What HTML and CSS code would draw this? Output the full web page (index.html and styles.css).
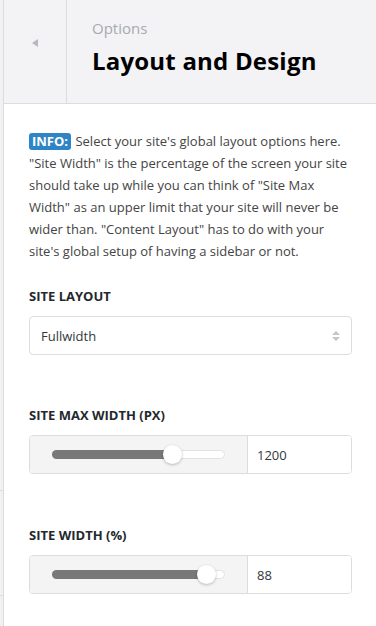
FILE: index.html
```html
<!DOCTYPE html>
<html>
<head>
<meta charset="utf-8">
<link rel="stylesheet" href="styles.css">
</head>
<body>
<div class="frame">
  <div class="strip">
    <div class="strip-block strip-a"></div>
    <div class="strip-block strip-b"></div>
    <div class="strip-block strip-c"></div>
  </div>
  <div class="panel">
    <header class="head">
      <div class="back"><span class="back-arrow"></span></div>
      <div class="titles">
        <div class="crumb">Options</div>
        <h1 class="title">Layout and Design</h1>
      </div>
    </header>
    <main class="content">
      <p class="info"><span class="badge">INFO:</span> Select your site's global layout options here. "Site Width" is the percentage of the screen your site should take up while you can think of "Site Max Width" as an upper limit that your site will never be wider than. "Content Layout" has to do with your site's global setup of having a sidebar or not.</p>

      <section class="field field-layout">
        <div class="label">Site Layout</div>
        <div class="select">
          <span class="select-value">Fullwidth</span>
          <span class="select-arrows"><span class="arr-up"></span><span class="arr-down"></span></span>
        </div>
      </section>

      <section class="field field-max">
        <div class="label">Site Max Width (px)</div>
        <div class="range">
          <div class="range-track-wrap">
            <div class="track">
              <div class="fill" style="width:70%"></div>
              <div class="thumb" style="left:70%"></div>
            </div>
          </div>
          <div class="range-input">1200</div>
        </div>
      </section>

      <section class="field field-width">
        <div class="label">Site Width (%)</div>
        <div class="range">
          <div class="range-track-wrap">
            <div class="track">
              <div class="fill" style="width:90%"></div>
              <div class="thumb" style="left:90%"></div>
            </div>
          </div>
          <div class="range-input">88</div>
        </div>
      </section>
    </main>
  </div>
</div>
</body>
</html>
```

FILE: styles.css
```css
* { box-sizing: border-box; }
html, body { margin: 0; padding: 0; background: #fff; }
body {
  font-family: "Open Sans", "Noto Sans", sans-serif;
  color: #444;
  width: 376px;
  height: 626px;
  overflow: hidden;
}
.frame {
  display: flex;
  height: 626px;
}
.strip {
  width: 4px;
  flex: none;
  display: flex;
  flex-direction: column;
  background: #f1f1f1;
  border-right: 1px solid #dcdcde;
}
.strip-block { border-bottom: 1px solid #dcdcde; }
.strip-a { height: 104px; border-bottom: none; }
.strip-b { height: 387px; }
.strip-c { height: 105px; }
.panel {
  flex: 1;
  display: flex;
  flex-direction: column;
}
.head {
  height: 104px;
  background: #f3f3f5;
  border-bottom: 1px solid #dcdcde;
  display: flex;
}
.back {
  width: 63px;
  border-right: 1px solid #dcdcde;
  display: flex;
  align-items: center;
  justify-content: center;
  padding-bottom: 18px;
}
.back-arrow {
  width: 0; height: 0;
  border-top: 4px solid transparent;
  border-bottom: 4px solid transparent;
  border-right: 6px solid #b4b9be;
}
.titles {
  padding: 18px 0 0 25px;
}
.crumb {
  font-size: 15px;
  color: #a7aaad;
  line-height: 20px;
}
.title {
  margin: 8px 0 0 0;
  font-size: 24px;
  letter-spacing: 0.2px;
  font-weight: 700;
  color: #000;
  line-height: 30px;
}
.content {
  padding: 26px 24px 0 25px;
}
.info {
  margin: 0;
  font-size: 13px;
  line-height: 22px;
  color: #444;
}
.badge {
  display: inline-block;
  background: #2e84c5;
  color: #fff;
  font-weight: 700;
  font-size: 13px;
  line-height: 17px;
  padding: 0 3px;
  margin-right: 1px;
  border-radius: 3px;
}
.field { margin-top: 26px; }
.field-max { margin-top: 52px; }
.field-width { margin-top: 53px; }
.label {
  font-size: 13px;
  font-weight: 700;
  text-transform: uppercase;
  color: #23282d;
  line-height: 16px;
  margin-bottom: 12px;
}
.select {
  height: 39px;
  border: 1px solid #dddddd;
  border-radius: 4px;
  display: flex;
  align-items: center;
  justify-content: space-between;
  padding: 0 11px 0 11px;
  font-size: 13px;
  color: #32373c;
}
.select-arrows {
  display: flex;
  flex-direction: column;
  gap: 2px;
}
.arr-up, .arr-down {
  width: 0; height: 0;
  border-left: 4px solid transparent;
  border-right: 4px solid transparent;
}
.arr-up { border-bottom: 4px solid #c3c4c7; }
.arr-down { border-top: 4px solid #c3c4c7; }
.range {
  height: 39px;
  border: 1px solid #dddddd;
  border-radius: 4px;
  display: flex;
  overflow: hidden;
}
.range-track-wrap {
  width: 218px;
  background: #f4f4f4;
  border-right: 1px solid #dddddd;
  display: flex;
  align-items: center;
  padding: 0 22px;
}
.track {
  position: relative;
  flex: 1;
  height: 9px;
  border-radius: 5px;
  background: #fff;
  border: 1px solid #e2e2e2;
}
.fill {
  background: #787878;
  border-radius: 5px 0 0 5px;
  margin: -1px 0 0 -1px;
  height: 9px;
}
.thumb {
  position: absolute;
  top: 50%;
  width: 19px;
  height: 19px;
  margin: -10px 0 0 -10px;
  border-radius: 50%;
  background: #fff;
  box-shadow: 0 1px 3px rgba(0,0,0,0.25);
}
.range-input {
  flex: 1;
  display: flex;
  align-items: center;
  padding-left: 9px;
  font-size: 13px;
  color: #32373c;
  background: #fff;
}
```
